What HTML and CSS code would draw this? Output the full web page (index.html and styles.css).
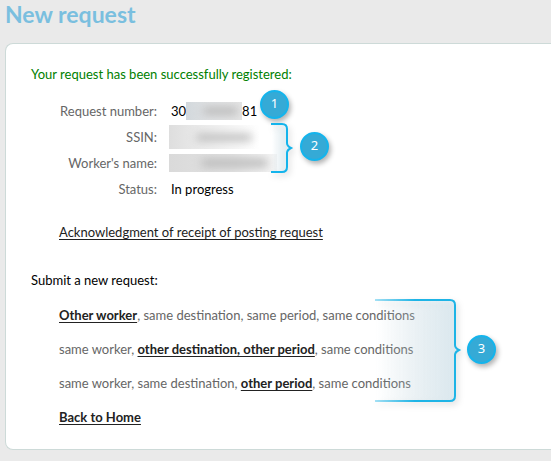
FILE: index.html
```html
<!DOCTYPE html>
<html lang="en">
<head>
  <meta charset="UTF-8">
  <title>New request</title>
  <link rel="stylesheet" href="styles.css">
</head>
<body>

  <h1>New request</h1>

  <main class="panel">
    <p class="success">Your request has been successfully registered:</p>

    <!-- REQUEST DETAILS -->
    <div class="details-wrap">
      <dl class="details">
        <dt>Request number:</dt>
        <dd>30<span class="mask mask-number"></span>81</dd>
        <dt>SSIN:</dt>
        <dd><span class="mask mask-ssin"></span></dd>
        <dt>Worker's name:</dt>
        <dd><span class="mask mask-name"></span></dd>
        <dt>Status:</dt>
        <dd>In progress</dd>
      </dl>
      <span class="marker marker-1">1</span>
      <svg class="brace brace-2" width="24" height="54" viewBox="0 0 24 54">
        <defs>
          <linearGradient id="fade2" x1="0" x2="1" y1="0" y2="0">
            <stop offset="0" stop-color="#d6ebf4" stop-opacity="0"/>
            <stop offset="1" stop-color="#d6ebf4" stop-opacity=".7"/>
          </linearGradient>
        </defs>
        <path fill="url(#fade2)" d="M0 3h11q5 0 5 5v14q0 3 4 5q-4 2-4 5v14q0 5-5 5H0z"/>
        <path class="brace-line" d="M0 3h11q5 0 5 5v14q0 3 4 5q-4 2-4 5v14q0 5-5 5H0"/>
      </svg>
      <span class="marker marker-2">2</span>
    </div>

    <p class="receipt"><a href="#">Acknowledgment of receipt of posting request</a></p>

    <!-- NEXT STEPS -->
    <p class="submit">Submit a new request:</p>
    <div class="options-wrap">
      <ul class="options">
        <li><a href="#">Other worker</a>, same destination, same period, same conditions</li>
        <li>same worker, <a href="#">other destination, other period</a>, same conditions</li>
        <li>same worker, same destination, <a href="#">other period</a>, same conditions</li>
        <li><a href="#">Back to Home</a></li>
      </ul>
      <svg class="brace brace-3" width="88" height="108" viewBox="0 0 88 108">
        <defs>
          <linearGradient id="fade3" x1="0" x2="1" y1="0" y2="0">
            <stop offset="0" stop-color="#cbe4f0" stop-opacity="0"/>
            <stop offset="1" stop-color="#cbe4f0" stop-opacity=".55"/>
          </linearGradient>
          <linearGradient id="line3" gradientUnits="userSpaceOnUse" x1="0" x2="40" y1="0" y2="0">
            <stop offset="0" stop-color="#1eb4e6" stop-opacity=".4"/>
            <stop offset="1" stop-color="#1eb4e6"/>
          </linearGradient>
        </defs>
        <path fill="url(#fade3)" d="M0 3h75q5 0 5 5v40q0 3 4 5q-4 2-4 5v41q0 5-5 5H0z"/>
        <path class="brace-line brace-line-fade" d="M0 3h75q5 0 5 5v40q0 3 4 5q-4 2-4 5v41q0 5-5 5H0"/>
      </svg>
      <span class="marker marker-3">3</span>
    </div>
  </main>

</body>
</html>
```
FILE: styles.css
```css
/* BASIC RESET & BODY */
* {
  margin: 0;
  padding: 0;
  box-sizing: border-box;
}
body {
  font-family: Lato, sans-serif;
  font-size: 13px;
  line-height: 20px;
  background-color: #eaeaea;
  color: #666;
}
h1 {
  padding-left: 5px;
  margin-bottom: 15px;
  font-size: 23px;
  line-height: 28px;
  color: #7abfdf;
}
a {
  color: #222;
  text-underline-offset: 2px;
}

/* PANEL */
.panel {
  margin-left: 5px;
  padding: 20px 0 22px 25px;
  background-color: #fff;
  border: 1px solid #cddad8;
  border-right: none;
  border-radius: 8px 0 0 8px;
}
.success {
  color: #008000;
}

/* REQUEST DETAILS */
.details-wrap {
  position: relative;
  margin: 17px 0 0 28px;
}
.details {
  display: grid;
  grid-template-columns: 98px 1fr;
  gap: 6px 14px;
}
.details dt {
  text-align: right;
}
.details dd {
  display: flex;
  align-items: center;
  height: 20px;
  color: #000;
}
.mask {
  position: relative;
  overflow: hidden;
}
.mask::after {
  content: "";
  position: absolute;
  top: 5px;
  bottom: 5px;
  left: 30%;
  right: 8%;
  border-radius: 4px;
  background-color: #bbb;
  filter: blur(4px);
}
.mask-number {
  width: 56px;
  height: 18px;
  background: linear-gradient(90deg, #d2d8dc, #dfe1e3 40%, #e4e4e4);
}
.mask-ssin {
  width: 90px;
  height: 24px;
  margin-left: -2px;
  background: linear-gradient(90deg, #dedede, #ececec 40%, #fff);
}
.mask-ssin::after {
  top: 9px;
  bottom: 8px;
}
.mask-name {
  width: 108px;
  height: 18px;
  margin-left: -2px;
  background: linear-gradient(90deg, #dadada, #e2e2e2 60%, #f6f6f6);
}

/* LINKS */
.receipt {
  margin: 23px 0 28px 28px;
}
.submit {
  color: #000;
}
.options-wrap {
  position: relative;
  margin: 15px 0 0 28px;
}
.options {
  display: grid;
  gap: 14px;
  list-style: none;
}
.options a {
  font-weight: bold;
}

/* CALLOUTS */
.marker {
  position: absolute;
  width: 29px;
  height: 29px;
  border: 2px solid #14b4ec;
  border-radius: 50%;
  background-color: #35aad6;
  box-shadow: 2px 3px 5px rgba(0, 0, 0, 0.3);
  color: #fff;
  font-family: "Noto Sans", sans-serif;
  font-size: 13px;
  line-height: 23px;
  text-align: center;
}
.marker-1 {
  left: 201px;
  top: -11px;
}
.marker-2 {
  left: 241px;
  top: 31px;
}
.marker-3 {
  left: 408px;
  top: 30px;
}
.brace {
  position: absolute;
  overflow: visible;
  filter: drop-shadow(2px 3px 3px rgba(0, 0, 0, 0.15));
}
.brace-line {
  fill: none;
  stroke: #14b4ec;
  stroke-width: 2;
}
.brace-line-fade {
  stroke: url(#line3);
}
.brace-2 {
  left: 212px;
  top: 20px;
}
.brace-3 {
  left: 316px;
  top: -8px;
}
```
